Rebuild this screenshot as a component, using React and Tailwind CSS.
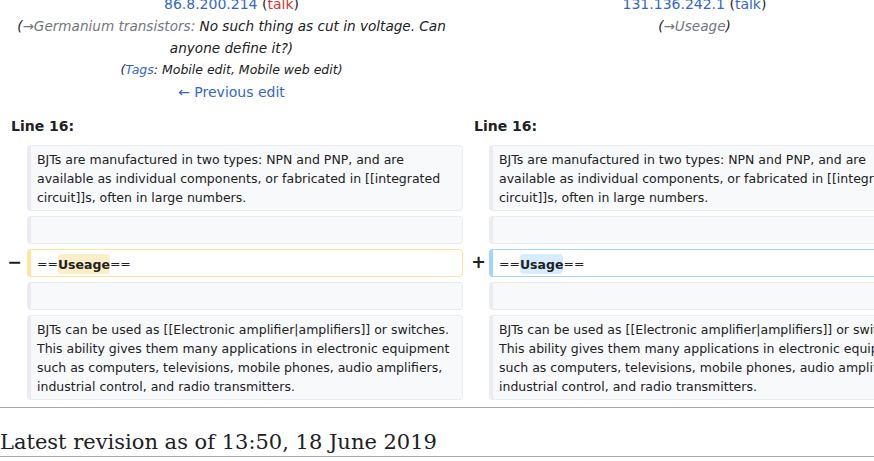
import React from 'react';

const BOX = 'rounded-[4px] border border-l-4 px-[6px] pt-[4px] pb-[3px] text-[12.5px] leading-[19px] min-h-[28px]';

function Context({ children }) {
  return <div className={`${BOX} bg-[#f8f9fa] border-[#eaecf0]`}>{children}</div>;
}

function Marker({ children, className = '' }) {
  return (
    <div className={`flex items-center justify-end font-bold text-[17.5px] leading-none ${className}`}>
      {children}
    </div>
  );
}

function Row({ left, right, markL = '', markR = '' }) {
  return (
    <div className="flex">
      <Marker className="w-[27px] pr-[5px]">{markL}</Marker>
      <div className="w-[436px]">{left}</div>
      <Marker className="w-[26px] pr-[3px]">{markR}</Marker>
      <div className="w-[437px]">{right}</div>
    </div>
  );
}

const ctx1 = (
  <Context>
    BJTs are manufactured in two types: NPN and PNP, and are available as individual components, or fabricated in [[integrated circuit]]s, often in large numbers.
  </Context>
);

const ctx2 = (
  <Context>
    BJTs can be used as [[Electronic amplifier|amplifiers]] or switches. This ability gives them many applications in electronic equipment such as computers, televisions, mobile phones, audio amplifiers, industrial control, and radio transmitters.
  </Context>
);

export default function App() {
  return (
    <div className="w-[874px] h-[461px] overflow-hidden bg-white text-[#202122] font-['DejaVu_Sans',sans-serif]">
      <div className="w-[926px] -mt-[7px]">
        {/* revision headers */}
        <div className="grid grid-cols-[463px_463px] text-center text-[14px] leading-[22px]">
          <div>
            <div>
              <span className="text-[#3366cc]">86.8.200.214</span> (<span className="text-[#d73333]">talk</span>)
            </div>
            <div className="italic text-[13.6px]">
              (<span className="text-[#72777d]">→Germanium transistors:</span> No such thing as cut in voltage. Can
              <br />
              anyone define it?)
            </div>
            <div className="italic text-[12.5px]">
              (<span className="text-[#3366cc]">Tags</span>: Mobile edit, Mobile web edit)
            </div>
            <div className="text-[#3366cc]">← Previous edit</div>
          </div>
          <div>
            <div>
              <span className="text-[#3366cc]">131.136.242.1</span> (<span className="text-[#3366cc]">talk</span>)
            </div>
            <div className="italic text-[13.6px]">
              (<span className="text-[#72777d]">→Useage</span>)
            </div>
          </div>
        </div>

        {/* line numbers */}
        <div className="mt-[12px] grid grid-cols-[463px_463px] text-[14px] leading-[22px] font-bold">
          <div className="pl-[11px]">Line 16:</div>
          <div className="pl-[11px]">Line 16:</div>
        </div>

        <div className="mt-[8px] flex flex-col gap-[5px]">
          <Row left={ctx1} right={ctx1} />
          <Row left={<Context />} right={<Context />} />
          <Row
            markL="−"
            markR="+"
            left={
              <div className={`${BOX} bg-white border-[#ffe49c]`}>
                ==<span className="font-bold bg-[#feeec8] rounded-[4px] py-[2.5px]">Useage</span>==
              </div>
            }
            right={
              <div className={`${BOX} bg-white border-[#a3d3ff]`}>
                ==<span className="font-bold bg-[#d8ecff] rounded-[4px] py-[2.5px]">Usage</span>==
              </div>
            }
          />
          <Row left={<Context />} right={<Context />} />
          <Row left={ctx2} right={ctx2} />
        </div>
      </div>

      <div className="mt-[7px] border-t border-[#a2a9b1]" />
      <h2 className="mt-[21px] border-b border-[#a2a9b1] font-['DejaVu_Serif',serif] text-[21px] leading-[27.3px]">
        Latest revision as of 13:50, 18 June 2019
      </h2>
    </div>
  );
}
